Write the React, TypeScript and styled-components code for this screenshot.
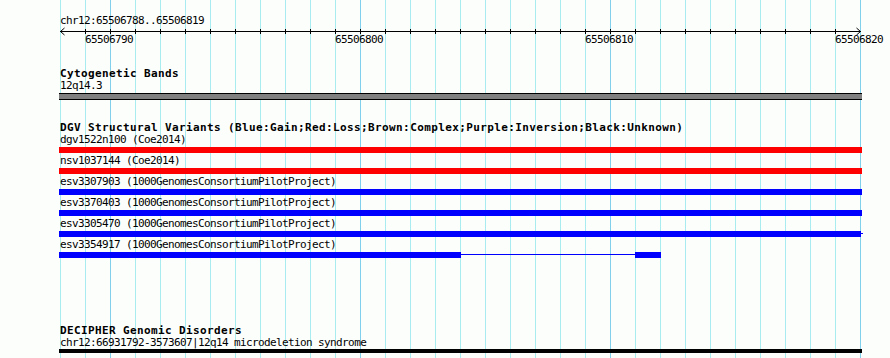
import React from "react";
import styled, { createGlobalStyle } from "styled-components";

const GlobalStyle = createGlobalStyle`
  html, body { margin: 0; padding: 0; background: #fcfefc; }
  body { width: 890px; height: 358px; overflow: hidden; }
`;

const Canvas = styled.div`
  position: relative;
  width: 890px;
  height: 358px;
  overflow: hidden;
  background: #fcfefc;
  color: #000;
  font-family: "DejaVu Sans Mono", "Liberation Mono", monospace;
`;

const GridLayer = styled.div`
  position: absolute;
  top: 0;
  bottom: 0;
  left: 60px;
  display: flex;
  gap: 24px;
  z-index: 0;
  pointer-events: none;
`;

const GridLine = styled.div<{ $major: boolean }>`
  width: 1px;
  height: 100%;
  background: ${(p) => (p.$major ? "#80d0ec" : "#a8ecf0")};
`;

const Content = styled.div`
  position: relative;
  z-index: 1;
  padding-top: 15px;
  display: flex;
  flex-direction: column;
`;

const SmallText = styled.div`
  font-size: 11px;
  line-height: 12px;
  height: 12px;
  letter-spacing: -0.62px;
  white-space: nowrap;
`;

const RulerTitle = styled(SmallText)`
  margin-left: 60px;
`;

const AxisSvg = styled.svg`
  display: block;
  margin-left: 60px;
  overflow: visible;
`;

const TickLabels = styled.div`
  display: flex;
  gap: 202px;
  margin-left: 85px;
`;

const TickLabel = styled(SmallText)`
  width: 48px;
`;

const Section = styled.section<{ $gap: number }>`
  margin-top: ${(p) => p.$gap}px;
  display: flex;
  flex-direction: column;
`;

const TrackTitle = styled.div`
  margin-left: 60px;
  font-size: 11px;
  font-weight: bold;
  line-height: 12px;
  height: 12px;
  letter-spacing: 0.38px;
  white-space: nowrap;
`;

const Feature = styled.div<{ $after: number }>`
  display: flex;
  flex-direction: column;
  margin-bottom: ${(p) => p.$after}px;
`;

const FeatureLabel = styled(SmallText)`
  margin-left: 60px;
`;

const BarRow = styled.div<{ $gap: number; $h: number }>`
  display: flex;
  align-items: flex-start;
  margin-left: 59px;
  margin-top: ${(p) => p.$gap}px;
  height: ${(p) => p.$h}px;
`;

const Block = styled.div<{ $color: string; $border?: boolean }>`
  height: 100%;
  box-sizing: border-box;
  background: ${(p) => p.$color};
  border-top: ${(p) => (p.$border ? "1px solid #000" : "none")};
  border-bottom: ${(p) => (p.$border ? "1px solid #000" : "none")};
`;

const Connector = styled.div<{ $color: string; $offset: number }>`
  height: 1px;
  margin-top: ${(p) => p.$offset}px;
  background: ${(p) => p.$color};
`;

type Part = { kind: "block" | "line"; w: number };
type Item = { label: string; color: string; parts: Part[] };

const FULL: Part[] = [{ kind: "block", w: 803 }];

const dgv: Item[] = [
  { label: "dgv1522n100 (Coe2014)", color: "#ff0000", parts: FULL },
  { label: "nsv1037144 (Coe2014)", color: "#ff0000", parts: FULL },
  { label: "esv3307903 (1000GenomesConsortiumPilotProject)", color: "#0000ff", parts: FULL },
  { label: "esv3370403 (1000GenomesConsortiumPilotProject)", color: "#0000ff", parts: FULL },
  {
    label: "esv3305470 (1000GenomesConsortiumPilotProject)",
    color: "#0000ff",
    parts: [
      { kind: "block", w: 802 },
      { kind: "line", w: 2 },
    ],
  },
  {
    label: "esv3354917 (1000GenomesConsortiumPilotProject)",
    color: "#0000ff",
    parts: [
      { kind: "block", w: 402 },
      { kind: "line", w: 174 },
      { kind: "block", w: 26 },
    ],
  },
];

const gridXs = Array.from({ length: 33 }, (_, i) => 60 + i * 25);
const majors = new Set([110, 360, 610, 860]);

const Axis: React.FC = () => {
  const ticks = Array.from({ length: 31 }, (_, i) => (i + 1) * 25 + 0.5);
  return (
    <AxisSvg width={801} height={7} shapeRendering="crispEdges">
      <line x1={0} y1={4.5} x2={801} y2={4.5} stroke="#000" strokeWidth={1} />
      {ticks.map((x) => (
        <line key={x} x1={x} y1={2} x2={x} y2={7} stroke="#000" strokeWidth={1} />
      ))}
      <polyline points="4.5,1 0.5,4.5 4.5,8" fill="none" stroke="#000" strokeWidth={1} shapeRendering="auto" />
      <polyline points="796.5,1 800.5,4.5 796.5,8" fill="none" stroke="#000" strokeWidth={1} shapeRendering="auto" />
    </AxisSvg>
  );
};

const Bar: React.FC<{ color: string; parts: Part[]; gap: number; h: number; border?: boolean }> = ({
  color,
  parts,
  gap,
  h,
  border,
}) => (
  <BarRow $gap={gap} $h={h}>
    {parts.map((p, i) =>
      p.kind === "block" ? (
        <Block key={i} $color={color} $border={border} style={{ width: p.w }} />
      ) : (
        <Connector key={i} $color={color} $offset={Math.floor((h - 1) / 2)} style={{ width: p.w }} />
      )
    )}
  </BarRow>
);

export default function App() {
  return (
    <>
      <GlobalStyle />
      <Canvas>
        <GridLayer>
          {gridXs.map((x) => (
            <GridLine key={x} $major={majors.has(x)} />
          ))}
        </GridLayer>
        <Content>
          <RulerTitle>chr12:65506788..65506819</RulerTitle>
          <Axis />
          <TickLabels>
            {["65506790", "65506800", "65506810", "65506820"].map((t) => (
              <TickLabel key={t}>{t}</TickLabel>
            ))}
          </TickLabels>

          <Section $gap={22}>
            <TrackTitle>Cytogenetic Bands</TrackTitle>
            <Feature $after={0}>
              <FeatureLabel>12q14.3</FeatureLabel>
              <Bar color="#808080" parts={FULL} gap={1} h={7} border />
            </Feature>
          </Section>

          <Section $gap={22}>
            <TrackTitle>
              DGV Structural Variants (Blue:Gain;Red:Loss;Brown:Complex;Purple:Inversion;Black:Unknown)
            </TrackTitle>
            {dgv.map((it) => (
              <Feature key={it.label} $after={2}>
                <FeatureLabel>{it.label}</FeatureLabel>
                <Bar color={it.color} parts={it.parts} gap={1} h={6} />
              </Feature>
            ))}
          </Section>

          <Section $gap={65}>
            <TrackTitle>DECIPHER Genomic Disorders</TrackTitle>
            <Feature $after={0}>
              <FeatureLabel>chr12:66931792-3573607|12q14 microdeletion syndrome</FeatureLabel>
              <Bar color="#000000" parts={FULL} gap={0} h={4} />
            </Feature>
          </Section>
        </Content>
      </Canvas>
    </>
  );
}
